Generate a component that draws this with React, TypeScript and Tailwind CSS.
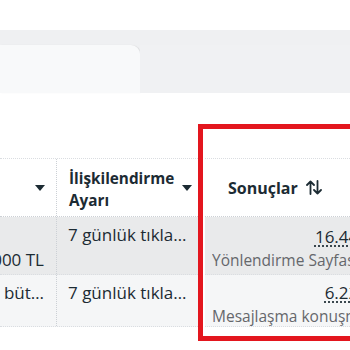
import React from 'react';

type Row = {
  budget: string;
  budgetAtBottom: boolean;
  attribution: string;
  result: string;
  resultType: string;
  bg: string;
  height: string;
  resultPad: string;
};

const ROWS: Row[] = [
  {
    budget: 'Günlük 1.000 TL',
    budgetAtBottom: true,
    attribution: '7 günlük tıkla…',
    result: '16.443',
    resultType: 'Yönlendirme Sayfası Görüntülemeleri',
    bg: 'bg-[#e9eaeb]',
    height: 'h-[58px]',
    resultPad: 'pt-[9px]',
  },
  {
    budget: 'Reklam seti büt…',
    budgetAtBottom: false,
    attribution: '7 günlük tıkla…',
    result: '6.224',
    resultType: 'Mesajlaşma konuşmaları başlatıldı',
    bg: 'bg-[#f5f6f7]',
    height: 'h-[52px]',
    resultPad: 'pt-[7px]',
  },
];

function Caret() {
  return (
    <svg width="10" height="6" viewBox="0 0 10 6" className="shrink-0">
      <path d="M0 0h10L5 6z" fill="#1c2b33" />
    </svg>
  );
}

function SortArrows() {
  return (
    <svg width="16" height="15" viewBox="0 0 16 15" fill="none" stroke="#1c2b33" strokeWidth="1.8" strokeLinecap="round" strokeLinejoin="round">
      <path d="M4.5 14V1.5M1 5l3.5-3.5L8 5" />
      <path d="M11.5 1v12.5M8 10l3.5 3.5L15 10" />
    </svg>
  );
}

export default function App() {
  return (
    <div
      className="relative w-[350px] h-[350px] overflow-hidden bg-white text-[#1c2b33]"
      style={{ fontFamily: '"Open Sans", "Noto Sans", sans-serif' }}
    >
      {/* tab strip */}
      <div className="h-[30px]" />
      <div className="bg-[#eff0f2] pt-[15px] flex">
        <div className="w-[140px] h-[48px] bg-[#f8f9fa] rounded-tr-[9px] shadow-[1px_0_1px_rgba(0,0,0,0.08)]" />
        <div className="flex-1 h-[48px] bg-[#f0f1f3]" />
      </div>
      <div className="h-[65px]" />

      {/* table */}
      <div className="w-[380px]">
        <div className="flex h-[59px] border-t border-[#dadde1] border-b border-dotted border-b-[#ccd0d5]">
          <div className="w-[57px] shrink-0 flex items-center justify-end pr-[11px] border-r border-dotted border-[#ccd0d5]">
            <Caret />
          </div>
          <div className="w-[143px] shrink-0 flex items-center justify-between pl-[12px] pr-[7px] border-r border-dotted border-[#ccd0d5]">
            <span className="text-[15.3px] font-bold leading-[22px] pt-[2px]">
              İlişkilendirme
              <br />
              Ayarı
            </span>
            <Caret />
          </div>
          <div className="flex-1 flex items-center pl-[28px] gap-[8px]">
            <span className="text-[16px] font-bold">Sonuçlar</span>
            <SortArrows />
          </div>
        </div>

        {ROWS.map((row) => (
          <div
            key={row.result}
            className={`flex ${row.height} ${row.bg} border-b border-dotted border-[#dadde1]`}
          >
            <div
              className={`w-[57px] shrink-0 flex justify-end pr-[12px] overflow-hidden whitespace-nowrap text-[17px] leading-[22px] border-r border-dotted border-[#ccd0d5] ${
                row.budgetAtBottom ? 'items-end pb-[3px]' : 'items-start pt-[7px]'
              }`}
            >
              {row.budget}
            </div>
            <div className="w-[143px] shrink-0 pl-[11px] pt-[7px] text-[17px] leading-[22px] whitespace-nowrap border-r border-dotted border-[#ccd0d5]">
              {row.attribution}
            </div>
            <div className={`w-[180px] shrink-0 px-[12px] ${row.resultPad} flex flex-col items-end`}>
              <span className="text-[17px] leading-[22px] underline decoration-dotted decoration-[#1c2b33] underline-offset-[3px]">
                {row.result}
              </span>
              <span className="self-start w-[210px] truncate text-[15.5px] leading-[25px] text-[#65676b]">
                {row.resultType}
              </span>
            </div>
          </div>
        ))}
      </div>

      {/* highlighted column */}
      <div className="absolute left-[198px] top-[124px] w-[170px] h-[217px] border-[5px] border-[#e3161e] shadow-[inset_0_0_0_2px_#fff]" />
    </div>
  );
}
